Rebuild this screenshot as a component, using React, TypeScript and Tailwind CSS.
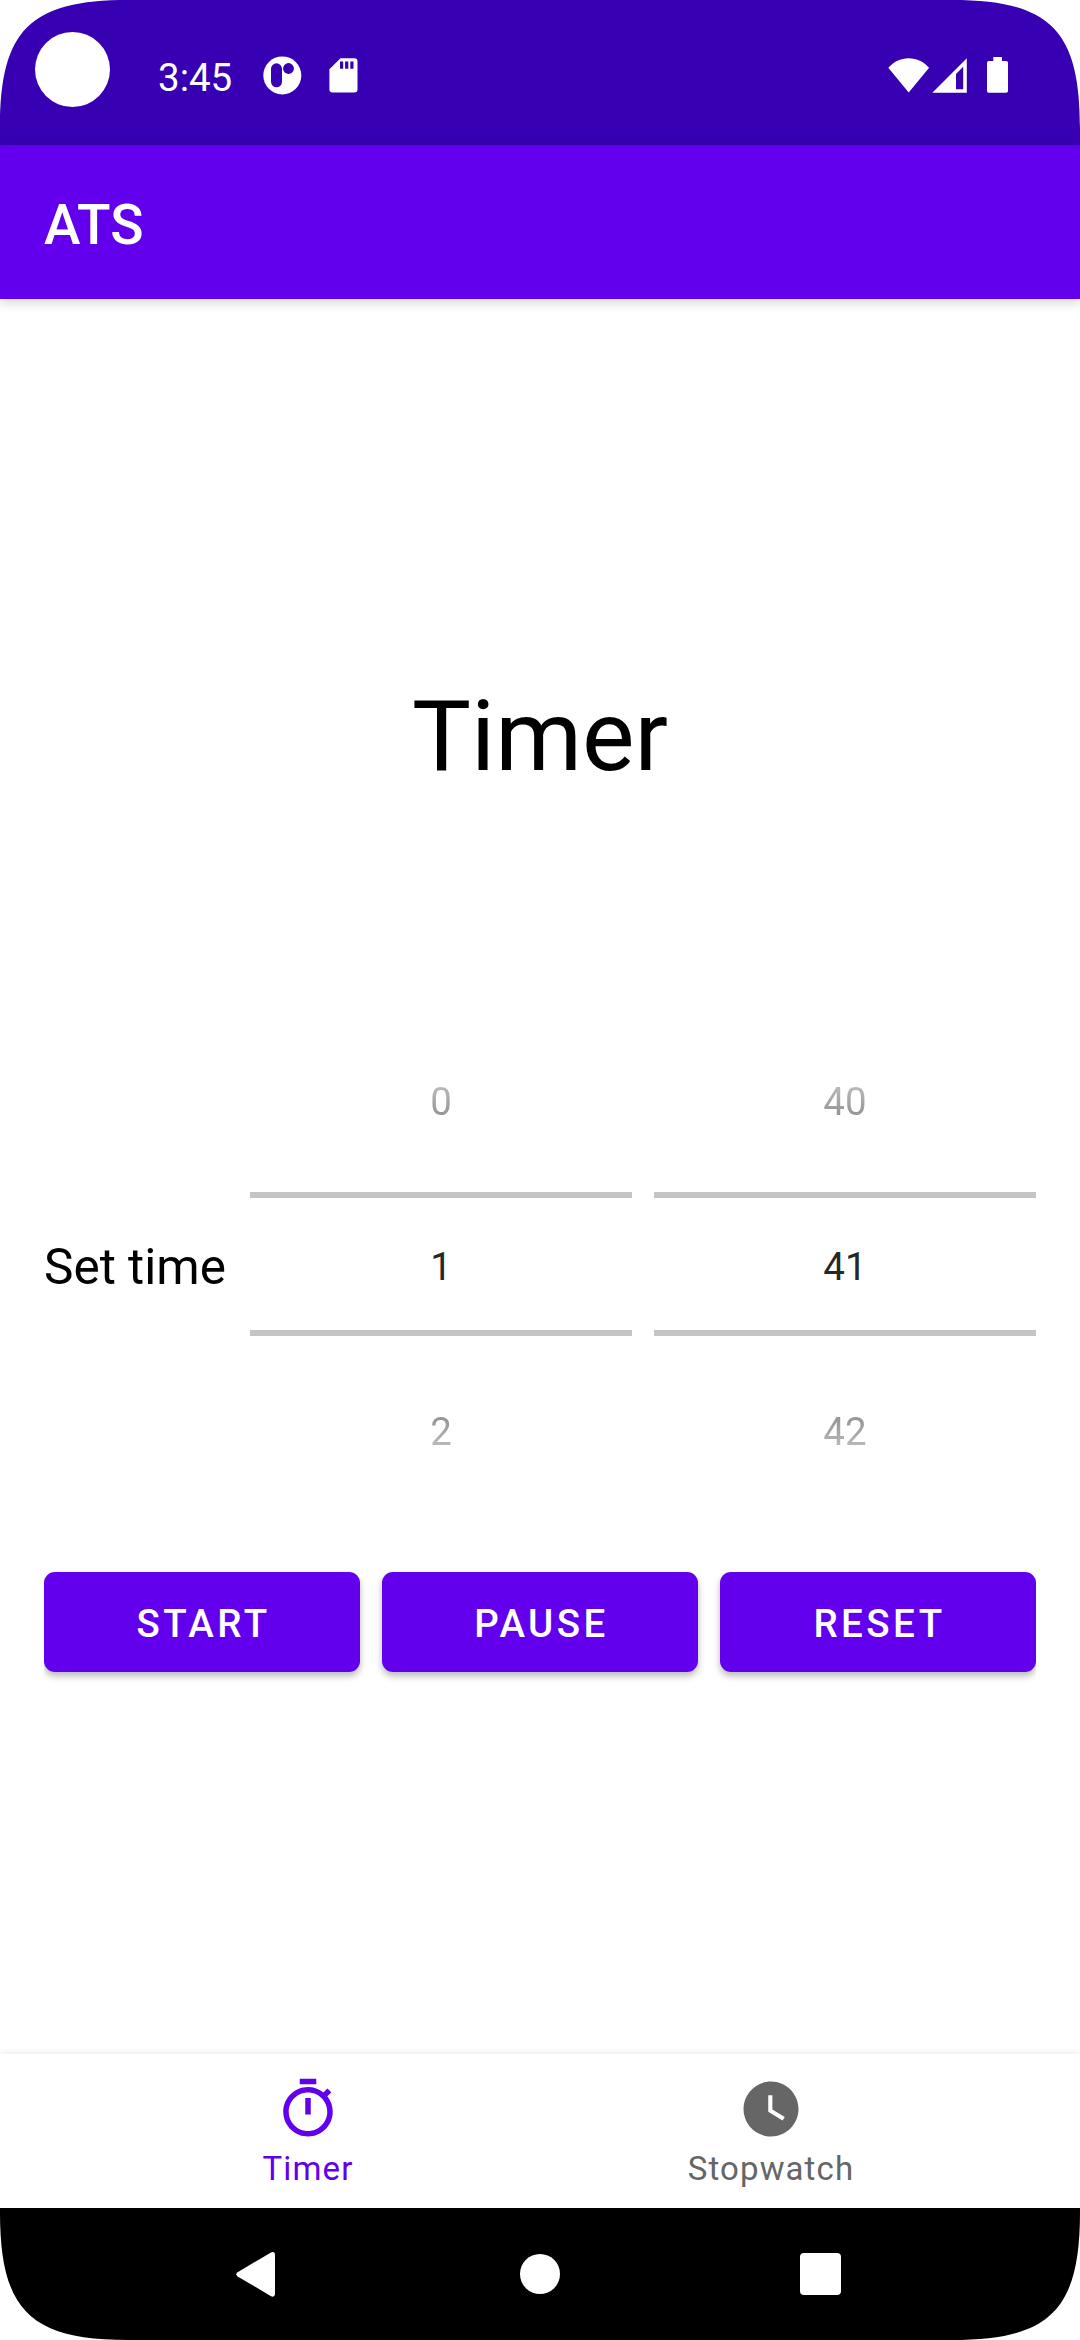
import React from "react";

const ACTIONS = ["START", "PAUSE", "RESET"];

function RotationIcon() {
  return (
    <svg className="block h-[40px] w-[40px]" viewBox="262 56 40 40">
      <circle cx="282.3" cy="75.4" r="19" fill="#fff" />
      <rect x="271" y="63.3" width="11" height="24" rx="5.5" fill="#3700b3" />
      <circle cx="288.5" cy="68.5" r="5.4" fill="#3700b3" />
    </svg>
  );
}

function SdCardIcon() {
  return (
    <svg className="block h-[40px] w-[30px]" viewBox="328 56 30 40">
      <path
        d="M340.5 58.2H354.3Q357.5 58.2 357.5 61.4V89.2Q357.5 92.4 354.3 92.4H332.6Q329.4 92.4 329.4 89.2V69.2Z"
        fill="#fff"
      />
      <path d="M340 61.6h3.2v7.2H340zM345.1 61.6h3.2v7.2h-3.2zM350.3 61.6h3.2v7.2h-3.2z" fill="#3700b3" />
    </svg>
  );
}

function SignalIcons() {
  return (
    <svg className="block h-[40px] w-[124px]" viewBox="888 56 124 40" fill="#fff">
      <path d="M908.7 92.5 888.3 67.8C893.7 61.6 900.6 58.2 908.7 58.2S923.7 61.6 929.1 67.8Z" />
      <path fillRule="evenodd" d="M932.3 92.8 966.8 58.3V92.8ZM956 74V89.2H963.2V66.8Z" />
      <path d="M993.3 57H1002V61H1006.2Q1008 61 1008 62.8V90.9Q1008 92.7 1006.2 92.7H988.8Q987 92.7 987 90.9V62.8Q987 61 988.8 61H993.3Z" />
    </svg>
  );
}

function StatusBar() {
  return (
    <header className="flex h-[145px] shrink-0 items-start bg-[#3700b3] text-white">
      <div className="mt-[32px] ml-[35px] h-[75px] w-[75px] rounded-full bg-white" />
      <span className="mt-[55px] ml-[48px] w-[104px] text-[38.5px] leading-[46px]">3:45</span>
      <div className="mt-[56px] flex gap-[26px]">
        <RotationIcon />
        <SdCardIcon />
      </div>
      <div className="mt-[56px] mr-[68px] ml-auto">
        <SignalIcons />
      </div>
    </header>
  );
}

function NumberPicker({ values }: { values: string[] }) {
  return (
    <div className="flex h-[495px] flex-1 flex-col items-stretch text-center text-[38.5px] text-black/87">
      <div className="h-[175px] pt-[62px] leading-[46px]">
        <span className="bg-linear-to-b from-[#b8b8b8] from-20% to-[#959595] to-80% bg-clip-text text-transparent">
          {values[0]}
        </span>
      </div>
      <div className="h-[144px] border-y-[6px] border-[#c4c4c4] pt-[46px] leading-[46px]">{values[1]}</div>
      <div className="h-[176px] pt-[73px] leading-[46px]">
        <span className="bg-linear-to-b from-[#959595] from-20% to-[#b8b8b8] to-80% bg-clip-text text-transparent">
          {values[2]}
        </span>
      </div>
    </div>
  );
}

function TimerIcon() {
  return (
    <svg className="block h-[66px] w-[66px]" viewBox="0 0 24 24" fill="currentColor">
      <path d="M15,1H9v2h6V1zM11,14h2V8h-2V14zM19.03,7.39l1.42,-1.42c-0.43,-0.51 -0.9,-0.99 -1.41,-1.41l-1.42,1.42C16.07,4.74 14.12,4 12,4c-4.97,0 -9,4.03 -9,9s4.02,9 9,9 9,-4.03 9,-9C21,10.88 20.26,8.93 19.03,7.39zM12,20c-3.87,0 -7,-3.13 -7,-7s3.13,-7 7,-7 7,3.13 7,7S15.87,20 12,20z" />
    </svg>
  );
}

function WatchIcon() {
  return (
    <svg className="block h-[66px] w-[66px]" viewBox="0 0 24 24" fill="currentColor">
      <path d="M12 2C6.5 2 2 6.5 2 12s4.5 10 10 10 10-4.5 10-10S17.5 2 12 2zm4.2 14.2L11 13V7h1.5v5.2l4.5 2.7-.8 1.3z" />
    </svg>
  );
}

function TabBar() {
  return (
    <nav className="flex h-[154px] shrink-0 justify-center gap-px bg-white pr-px text-[33px] leading-[40px] tracking-[1.1px] shadow-[0_0_8px_rgba(0,0,0,0.1)]">
      <div className="flex w-[462px] flex-col items-center pt-[22px] text-[#6200ee]">
        <TimerIcon />
        <span className="mt-[7px]">Timer</span>
      </div>
      <div className="flex w-[462px] flex-col items-center pt-[22px] text-[#666666]">
        <WatchIcon />
        <span className="mt-[7px]">Stopwatch</span>
      </div>
    </nav>
  );
}

function SystemNav() {
  return (
    <footer className="flex h-[132px] shrink-0 items-center bg-black pl-[236px]">
      <svg className="block h-[46px] w-[40px]" viewBox="236 2251 40 46">
        <path
          d="M271 2252.5 237.6 2272.2Q235 2274.3 237.6 2276.4L271 2296.2Q275 2297.8 275 2293.6V2255.2Q275 2251 271 2252.5Z"
          fill="#fff"
        />
      </svg>
      <div className="ml-[244px] h-[40px] w-[40px] rounded-full bg-white" />
      <div className="ml-[240px] h-[42px] w-[41px] rounded-[4px] bg-white" />
    </footer>
  );
}

function Corner({ className }: { className: string }) {
  return (
    <svg className={className} viewBox="0 0 128 128" fill="#fff">
      <path d="M0 0H128C30 0 0 30 0 128Z" />
    </svg>
  );
}

export default function App() {
  return (
    <div className="relative flex h-[2340px] w-[1080px] flex-col overflow-hidden bg-white font-['Roboto',sans-serif]">
      <StatusBar />
      <div className="flex h-[154px] shrink-0 items-center bg-[#6200ee] pt-[6px] pl-[44px] shadow-[0_3px_11px_rgba(0,0,0,0.19)]">
        <h1 className="text-[55px] leading-[64px] font-medium text-white">ATS</h1>
      </div>

      <main className="flex flex-1 flex-col px-[44px] pt-[379px]">
        <h2 className="h-[116px] text-center text-[99px] leading-[116px] text-black">Timer</h2>
        <div className="mt-[223px] flex items-center gap-[22px]">
          <span className="w-[184px] shrink-0 pt-[5px] text-[49.5px] leading-[58px] whitespace-nowrap text-black">Set time</span>
          <NumberPicker values={["0", "1", "2"]} />
          <NumberPicker values={["40", "41", "42"]} />
        </div>
        <div className="mt-[60px] flex gap-[22px] [clip-path:inset(-20px_0_-20px_0)]">
          {ACTIONS.map((label) => (
            <button
              key={label}
              className="h-[100px] flex-1 rounded-[11px] bg-[#6200ee] pt-[3px] pl-[3px] text-[38.5px] font-medium tracking-[3.44px] text-white shadow-[0_4px_7px_rgba(0,0,0,0.28)]"
            >
              {label}
            </button>
          ))}
        </div>
      </main>

      <TabBar />
      <SystemNav />

      <Corner className="absolute top-0 left-0 h-[128px] w-[128px]" />
      <Corner className="absolute top-0 right-0 h-[128px] w-[128px] rotate-90" />
      <Corner className="absolute right-0 bottom-0 h-[128px] w-[128px] rotate-180" />
      <Corner className="absolute bottom-0 left-0 h-[128px] w-[128px] -rotate-90" />
    </div>
  );
}
